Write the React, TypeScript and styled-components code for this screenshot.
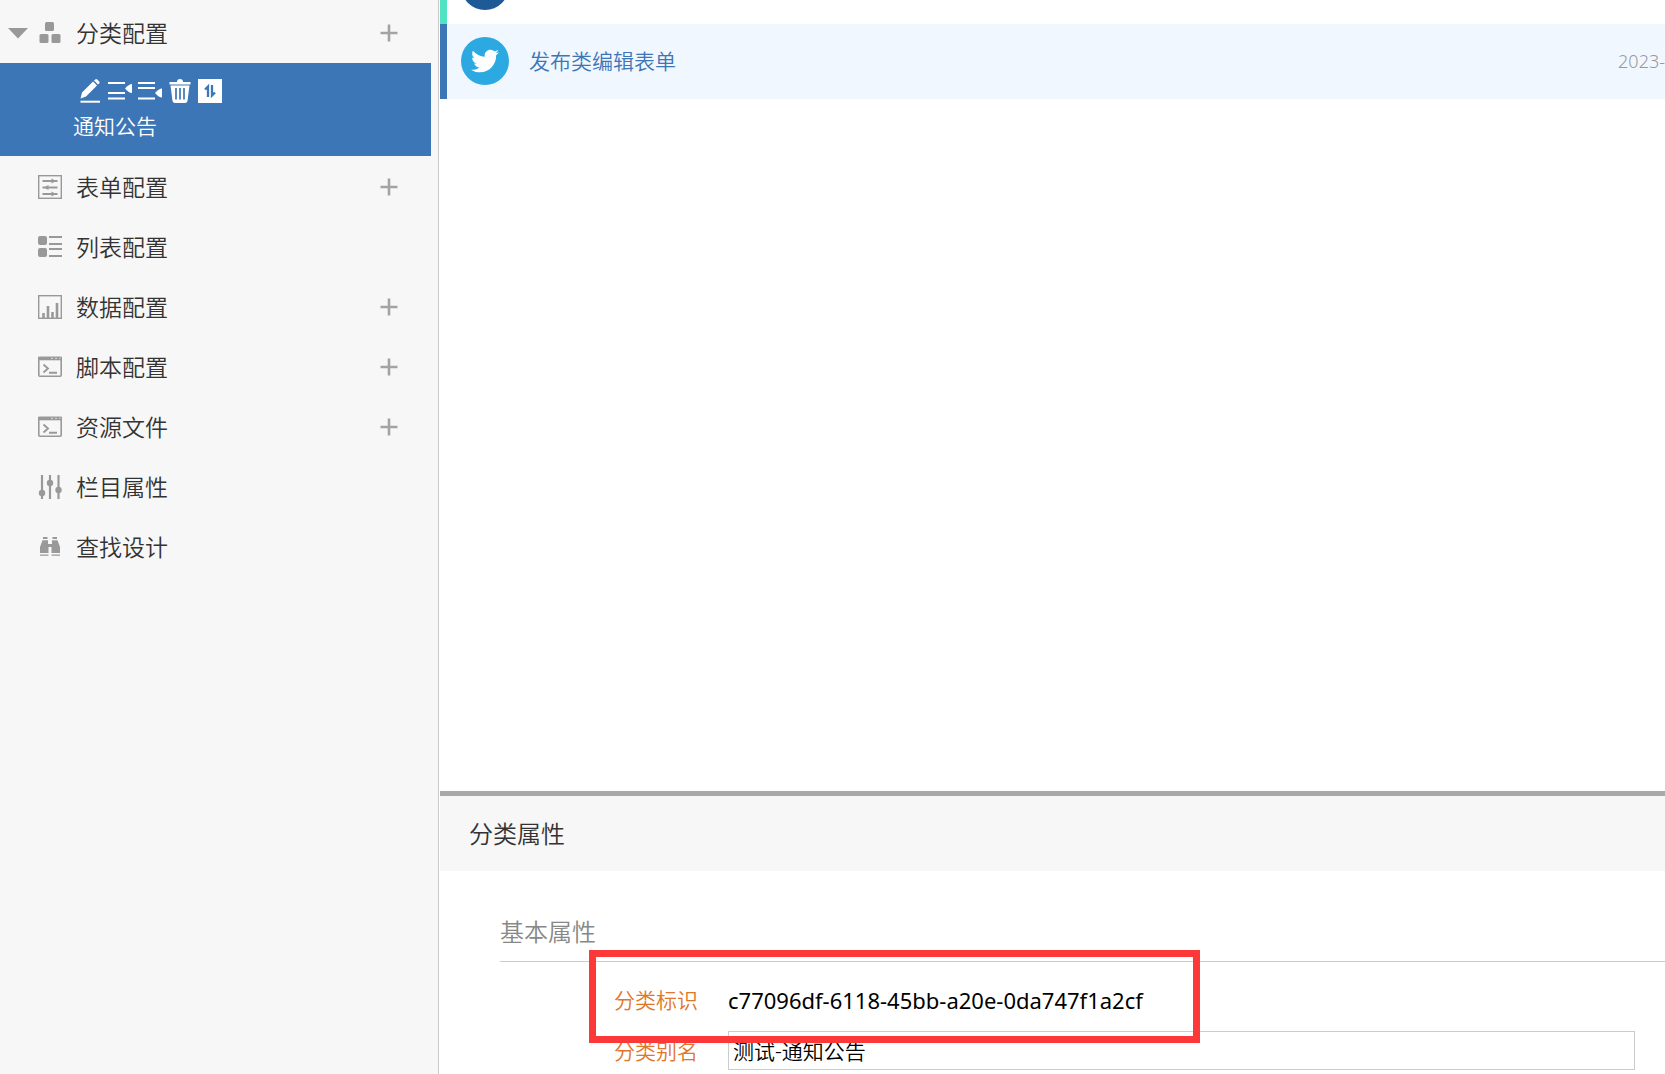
import React from 'react';
import styled, { createGlobalStyle } from 'styled-components';
import { FaTwitter } from 'react-icons/fa';

const GlobalStyle = createGlobalStyle`
  *, *::before, *::after { box-sizing: border-box; }
  body {
    margin: 0;
    background: #fff;
    color: #333;
    font-family: "Noto Sans", "Noto Sans CJK SC", sans-serif;
    font-size: 21px;
    font-weight: 350;
    line-height: 30px;
  }
  button, input { font: inherit; color: inherit; }
  button { margin: 0; padding: 0; border: 0; background: none; cursor: pointer; }
  h2, h3, ul, dl, dd { margin: 0; padding: 0; font-weight: inherit; }
  ul { list-style: none; }
  svg { display: block; flex: none; }
`;

const Page = styled.div`
  display: flex;
  gap: 1px;
  height: 100vh;
  overflow: hidden;
`;

const Sidebar = styled.nav`
  flex: 0 0 439px;
  padding: 3px 7px 0 0;
  background: #f7f7f7;
  border-right: 1px solid #ccc;
`;

const NavRow = styled.div`
  display: flex;
  align-items: center;
  height: 60px;
  padding: 0 32px 0 8px;
  color: #999;
`;

const Toggle = styled.button`
  display: flex;
  align-items: center;
  width: 30px;
  height: 24px;
`;

const NavLabel = styled.button`
  display: flex;
  flex: 1;
  align-items: center;
  gap: 14px;
  color: #999;
  text-align: left;
`;

const NavText = styled.span`
  color: #333;
  font-size: 23px;
  line-height: 32px;
`;

const AddButton = styled.button`
  display: grid;
  place-items: center;
  width: 20px;
  height: 24px;
  color: #a3a3a3;
`;

const Selected = styled.div`
  display: flex;
  flex-direction: column;
  gap: 8px;
  height: 93px;
  margin-bottom: 1px;
  padding: 16px 0 0 73px;
  background: #3c76b6;
  color: #fff;
`;

const Tools = styled.div`
  display: flex;
  gap: 6px;
  padding-left: 5px;
`;

const ToolButton = styled.button`
  width: 24px;
  height: 24px;
`;

const SelectedText = styled.span`
  line-height: 30px;
`;

const Main = styled.main`
  display: flex;
  flex: 1;
  flex-direction: column;
  min-width: 0;
`;

const ListPane = styled.section`
  display: flex;
  flex: 1;
  flex-direction: column;
  min-height: 0;
  overflow: hidden;
`;

/* The list is scrolled so that only the foot of its first row shows. */
const FormList = styled.ul`
  margin-top: -51px;
`;

const FormItem = styled.li<{ $bar: string; $active?: boolean }>`
  display: flex;
  align-items: center;
  gap: 20px;
  height: 75px;
  padding: 0 0 1px 14px;
  border-left: 7px solid ${(p) => p.$bar};
  background: ${(p) => (p.$active ? '#f0f7ff' : '#fff')};
`;

const Avatar = styled.span<{ $color: string }>`
  display: grid;
  flex: none;
  place-items: center;
  width: 48px;
  height: 48px;
  border-radius: 50%;
  background: ${(p) => p.$color};
  color: #fff;
`;

const FormLink = styled.a`
  flex: 1;
  color: #3c76b6;
  text-decoration: none;
`;

const FormDate = styled.time`
  color: #999;
  font-size: 18px;
  white-space: nowrap;
`;

const Properties = styled.section`
  border-top: 5px solid #a9a9a9;
  padding-bottom: 4px;
`;

const PanelTitle = styled.h2`
  height: 75px;
  padding: 0 29px;
  background: #f7f7f7;
  font-size: 24px;
  line-height: 76px;
`;

const Group = styled.div`
  padding: 44px 0 0 60px;
`;

const GroupTitle = styled.h3`
  height: 47px;
  border-bottom: 1px solid #ccc;
  color: #888;
  font-size: 24px;
  line-height: 34px;
`;

const Fields = styled.div`
  padding: 6px 30px 0 0;
`;

const Field = styled.div<{ $height: number }>`
  position: relative;
  display: grid;
  grid-template-columns: 198px 1fr;
  align-items: center;
  gap: 30px;
  height: ${(p) => p.$height}px;
`;

const FieldLabel = styled.label`
  color: #e0762a;
  text-align: right;
`;

const FieldValue = styled.output`
  color: #000;
  font-size: 22px;
  font-weight: 400;
`;

const TextInput = styled.input`
  width: 100%;
  min-width: 0;
  height: 39px;
  padding: 0 4px 1px;
  border: 1px solid #ccc;
  border-radius: 0;
  background: #fff;
  color: #000;
`;

const Highlight = styled.span`
  position: absolute;
  z-index: 1;
  top: -18px;
  left: 89px;
  width: 611px;
  height: 93px;
  border: 7px solid #fc3838;
  pointer-events: none;
`;

const Svg = ({ children }: { children: React.ReactNode }) => (
  <svg width="24" height="24" viewBox="0 0 24 24" fill="none" stroke="currentColor" strokeWidth="1.6" aria-hidden="true">
    {children}
  </svg>
);

const CategoryIcon = () => (
  <Svg>
    <g fill="currentColor" stroke="none">
      <rect x="7" y="1" width="9" height="9" rx="1.5" />
      <rect x="1.5" y="13" width="9" height="9" rx="1.5" />
      <rect x="13.5" y="13" width="9" height="9" rx="1.5" />
    </g>
  </Svg>
);

const FormIcon = () => (
  <Svg>
    <rect x=".7" y=".7" width="22.6" height="22.6" strokeWidth="1.4" />
    <path d="M4.5 6h15M4.5 12.5h15M4.5 19h15" strokeWidth="1.9" />
    <path d="M13.500 3.400 18 6l-4.500 2.600zM10.500 9.900 6 12.500l4.500 2.600zM13.500 16.400 18 19l-4.500 2.600z" fill="currentColor" stroke="none" />
  </Svg>
);

const ListIcon = () => (
  <Svg>
    <rect x="0" y="1" width="9" height="9" rx="2" fill="currentColor" stroke="none" />
    <rect x="0" y="13" width="9" height="9" rx="2" fill="currentColor" stroke="none" />
    <path d="M11 2h13M11 9h13M11 14h13M11 21h13" strokeWidth="2" />
  </Svg>
);

const ChartIcon = () => (
  <Svg>
    <rect x=".7" y=".7" width="22.6" height="22.6" strokeWidth="1.4" />
    <path d="M5.500 23v-5M10 23V11M14.500 23v-6M19 23V8" strokeWidth="2.600" />
  </Svg>
);

const ScriptIcon = () => (
  <Svg>
    <rect x=".8" y="2.500" width="22.400" height="18.700" rx="1" />
    <path d="M0 3.500h24" strokeWidth="3.600" />
    <path d="M13 3.300h2M17 3.300h2M21 3.300h1.500" stroke="#ddd" strokeWidth="1" />
    <path d="m5.500 9.500 4.500 4-4.500 4M11 17.800h8" strokeWidth="1.900" />
  </Svg>
);

const SlidersIcon = () => (
  <Svg>
    <path d="M4 0v24M12 0v24M20.500 0v24" strokeWidth="2.200" />
    <g fill="currentColor" stroke="none">
      <circle cx="4" cy="18" r="3.200" />
      <circle cx="12" cy="8" r="3.200" />
      <circle cx="20.500" cy="15" r="3.200" />
    </g>
  </Svg>
);

const FindIcon = () => (
  <Svg>
    <g fill="currentColor" stroke="none">
      <path d="M5 2h4.500v2H5zM14.500 2H19v2h-4.500zM4.500 5.200H10V9h4V5.200h5.500L22 12v6h-8.500v-6h-3v6H2v-6z" />
      <path d="M2 19.500h8.500v1.300H2zM13.500 19.500H22v1.300h-8.500z" />
    </g>
  </Svg>
);

const EditIcon = () => (
  <Svg>
    <path d="M2.500 19.500 4 13.500 15 2.500l4 4L8 17.500zM16 1.600 17.200.5q1-.8 2 0l2 2q.8 1 0 2L20 5.600z" fill="currentColor" stroke="none" />
    <path d="M2.500 22.700h19.500" strokeWidth="2" />
  </Svg>
);

const InsertAboveIcon = () => (
  <Svg>
    <path d="M0 4h17M0 14h17M0 19.500h17" strokeWidth="2.100" />
    <path d="M17 9.500q4-4.500 7-4.500v9q-3 0-7-4.500z" fill="currentColor" stroke="none" />
  </Svg>
);

const InsertBelowIcon = () => (
  <Svg>
    <path d="M0 4h17M0 9h17M0 19.500h17" strokeWidth="2.100" />
    <path d="M17 14q4-4.500 7-4.500v9q-3 0-7-4.500z" fill="currentColor" stroke="none" />
  </Svg>
);

const TrashIcon = () => (
  <Svg>
    <path d="M1.500 3H9q0-3 3-3t3 3h7.500v2.500h-21zM2.500 6.500h19L19.500 22q-.3 2-2.500 2H7q-2.200 0-2.500-2z" fill="currentColor" stroke="none" />
    <path d="M8 9v11.500M12 9v11.500M16 9v11.500" stroke="#3c76b6" strokeWidth="1.700" />
  </Svg>
);

const SortIcon = () => (
  <Svg>
    <path d="M0 0h24v24H0z" fill="currentColor" stroke="none" />
    <path d="M10 18V7.500L7 10.500M14 6v10.500l3-3" stroke="#3c76b6" strokeWidth="2.300" />
  </Svg>
);

const PlusIcon = () => (
  <svg width="18" height="18" viewBox="0 0 18 18" stroke="currentColor" strokeWidth="2.600" aria-hidden="true">
    <path d="M9 .5v17M.5 9h17" />
  </svg>
);

const ArrowIcon = () => (
  <svg width="20" height="12" viewBox="0 0 20 12" fill="#999" aria-hidden="true">
    <path d="M0 1h20L10 11.500z" />
  </svg>
);

const tools = [
  { name: '编辑', Icon: EditIcon },
  { name: '上方插入', Icon: InsertAboveIcon },
  { name: '下方插入', Icon: InsertBelowIcon },
  { name: '删除', Icon: TrashIcon },
  { name: '排序', Icon: SortIcon },
];

const sections = [
  { name: '表单配置', Icon: FormIcon, add: true },
  { name: '列表配置', Icon: ListIcon, add: false },
  { name: '数据配置', Icon: ChartIcon, add: true },
  { name: '脚本配置', Icon: ScriptIcon, add: true },
  { name: '资源文件', Icon: ScriptIcon, add: true },
  { name: '栏目属性', Icon: SlidersIcon, add: false },
  { name: '查找设计', Icon: FindIcon, add: false },
];

type SectionProps = { name: string; Icon: React.ComponentType; add: boolean; open?: boolean };

const Section = ({ name, Icon, add, open }: SectionProps) => (
  <NavRow>
    {open ? (
      <Toggle type="button" aria-label="收起" aria-expanded="true">
        <ArrowIcon />
      </Toggle>
    ) : (
      <Toggle as="span" />
    )}
    <NavLabel type="button">
      <Icon />
      <NavText>{name}</NavText>
    </NavLabel>
    {add && (
      <AddButton type="button" aria-label={`添加${name}`}>
        <PlusIcon />
      </AddButton>
    )}
  </NavRow>
);

export default function App() {
  return (
    <>
      <GlobalStyle />
      <Page>
        <Sidebar>
          <Section name="分类配置" Icon={CategoryIcon} add open />
          <Selected>
            <Tools>
              {tools.map(({ name, Icon }) => (
                <ToolButton key={name} type="button" aria-label={name}>
                  <Icon />
                </ToolButton>
              ))}
            </Tools>
            <SelectedText>通知公告</SelectedText>
          </Selected>
          {sections.map((s) => (
            <Section key={s.name} {...s} />
          ))}
        </Sidebar>
        <Main>
          <ListPane>
            <FormList>
              <FormItem $bar="#50e3c2">
                <Avatar $color="#1d5a96" />
              </FormItem>
              <FormItem $bar="#3c76b6" $active>
                <Avatar $color="#2ca9e1">
                  <FaTwitter size={28} />
                </Avatar>
                <FormLink href="#form">发布类编辑表单</FormLink>
                <FormDate>2023-</FormDate>
              </FormItem>
            </FormList>
          </ListPane>
          <Properties>
            <PanelTitle>分类属性</PanelTitle>
            <Group>
              <GroupTitle>基本属性</GroupTitle>
              <Fields>
                <Field $height={63}>
                  <FieldLabel htmlFor="category-id">分类标识</FieldLabel>
                  <FieldValue id="category-id">c77096df-6118-45bb-a20e-0da747f1a2cf</FieldValue>
                  <Highlight aria-hidden="true" />
                </Field>
                <Field $height={39}>
                  <FieldLabel htmlFor="category-alias">分类别名</FieldLabel>
                  <TextInput id="category-alias" type="text" defaultValue="测试-通知公告" />
                </Field>
              </Fields>
            </Group>
          </Properties>
        </Main>
      </Page>
    </>
  );
}
